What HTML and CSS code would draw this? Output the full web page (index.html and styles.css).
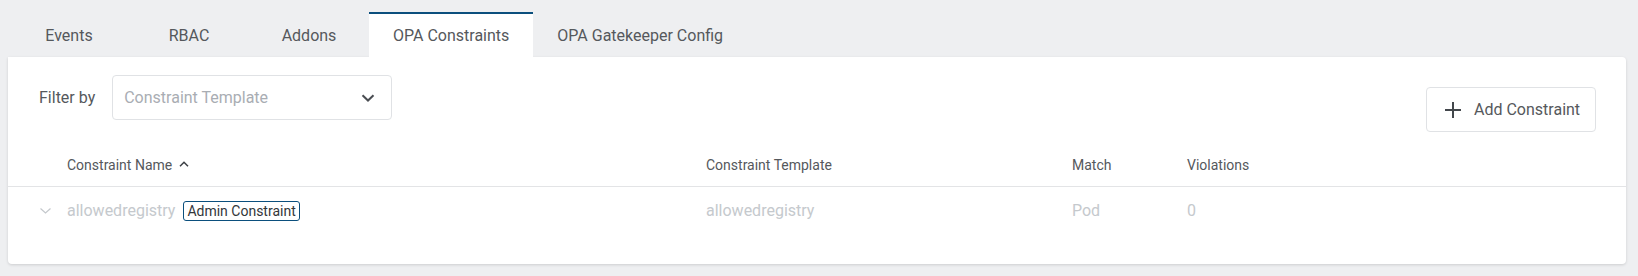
FILE: index.html
```html
<!DOCTYPE html>
<html>
<head>
<meta charset="utf-8">
<link rel="stylesheet" href="styles.css">
</head>
<body>
<div class="page">
  <nav class="tabs">
    <div class="tab">Events</div>
    <div class="tab">RBAC</div>
    <div class="tab">Addons</div>
    <div class="tab active">OPA Constraints</div>
    <div class="tab">OPA Gatekeeper Config</div>
  </nav>
  <section class="card">
    <div class="toolbar">
      <div class="filter">
        <span class="filter-label">Filter by</span>
        <div class="select">
          <span class="placeholder">Constraint Template</span>
          <svg class="select-arrow" width="14" height="8" viewBox="0 0 14 8"><path d="M1.5 1.2 L7 6.5 L12.5 1.2" fill="none" stroke="#4a4d52" stroke-width="2"/></svg>
        </div>
      </div>
      <button class="add-btn">
        <svg width="16" height="16" viewBox="0 0 16 16"><path d="M8 0 V16 M0 8 H16" stroke="#43474c" stroke-width="2"/></svg>
        <span>Add Constraint</span>
      </button>
    </div>
    <div class="table">
      <div class="row head">
        <div class="cell"></div>
        <div class="cell">Constraint Name
          <svg class="sort" width="10" height="6" viewBox="0 0 10 6"><path d="M1 5.2 L5 1.2 L9 5.2" fill="none" stroke="#3c4045" stroke-width="1.5"/></svg>
        </div>
        <div class="cell">Constraint Template</div>
        <div class="cell">Match</div>
        <div class="cell">Violations</div>
      </div>
      <div class="row body">
        <div class="cell expand">
          <svg width="11" height="6" viewBox="0 0 11 6"><path d="M0.5 0.5 L5.5 5 L10.5 0.5" fill="none" stroke="#c4c8cc" stroke-width="1.2"/></svg>
        </div>
        <div class="cell">allowedregistry <span class="badge">Admin Constraint</span></div>
        <div class="cell">allowedregistry</div>
        <div class="cell">Pod</div>
        <div class="cell">0</div>
      </div>
    </div>
  </section>
</div>
</body>
</html>
```

FILE: styles.css
```css
* { box-sizing: border-box; }
html, body {
  margin: 0;
  background: #eeeff1;
  font-family: Roboto, "Liberation Sans", Arial, sans-serif;
}
.page {
  padding: 12px 12px 12px 9px;
}
.tabs {
  display: flex;
  height: 45px;
}
.tab {
  min-width: 120px;
  padding: 0 24px;
  display: flex;
  align-items: center;
  justify-content: center;
  font-size: 16px;
  color: #55585c;
  border-top: 2px solid transparent;
}
.tab.active {
  background: #fff;
  border-top-color: #0b4f7d;
}
.card {
  margin-left: -1px;
  background: #fff;
  border-radius: 0 4px 4px 4px;
  box-shadow: 0 1px 3px rgba(0, 0, 0, 0.14);
  height: 207px;
}
.toolbar {
  display: flex;
  justify-content: space-between;
  align-items: flex-start;
  padding: 18px 30px 0 30px;
  height: 86px;
}
.filter {
  display: flex;
  align-items: center;
}
.filter-label {
  font-size: 16px;
  color: #55585c;
  margin-right: 17px;
  padding-left: 1px;
}
.select {
  width: 280px;
  height: 45px;
  border: 1px solid #e0e2e5;
  border-radius: 4px;
  display: flex;
  align-items: center;
  justify-content: space-between;
  padding: 0 16px 0 11px;
}
.placeholder {
  font-size: 16px;
  color: #a9adb3;
}
.add-btn {
  margin-top: 12px;
  height: 45px;
  width: 170px;
  display: flex;
  align-items: center;
  gap: 13px;
  padding: 0 0 0 18px;
  background: #fff;
  border: 1px solid #e0e2e5;
  border-radius: 4px;
  font-family: inherit;
  font-size: 16px;
  color: #55585c;
}
.row {
  display: grid;
  grid-template-columns: 59px 639px 366px 115px 1fr;
  align-items: center;
}
.row.head {
  height: 44px;
  border-bottom: 1px solid #e3e4e6;
  font-size: 14px;
  color: #55585c;
}
.row.body {
  height: 47px;
  font-size: 16px;
  color: #c5c9cd;
}
.cell {
  display: flex;
  align-items: center;
  white-space: nowrap;
}
.sort { margin-left: 7px; margin-top: -1px; }
.expand {
  justify-content: center;
  padding-left: 16px;
  padding-top: 1px;
}
.badge {
  margin-left: 8px;
  font-size: 14px;
  color: #33363a;
  border: 1px solid #0b4f7d;
  border-radius: 3px;
  padding: 0 3px;
  line-height: 18px;
}
```
